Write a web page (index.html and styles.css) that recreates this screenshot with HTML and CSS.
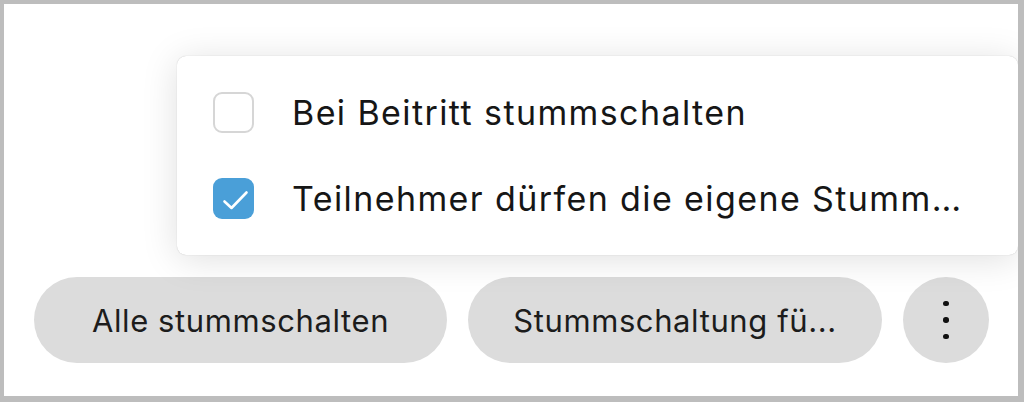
FILE: index.html
```html
<!DOCTYPE html>
<html lang="de">
<head>
<meta charset="utf-8">
<link rel="stylesheet" href="styles.css">
</head>
<body>
<div class="frame">
  <div class="actions">
    <button class="pill pill-all">Alle stummschalten</button>
    <button class="pill pill-unmute">Stummschaltung fü...</button>
    <button class="more" aria-label="Mehr">
      <span class="dot"></span><span class="dot"></span><span class="dot"></span>
    </button>
  </div>
  <div class="menu">
    <div class="option">
      <span class="box"></span>
      <span class="label">Bei Beitritt stummschalten</span>
    </div>
    <div class="option">
      <span class="box checked">
        <svg viewBox="0 0 41 41" width="41" height="41"><path d="M11.5 23.5 L18.5 30 L33.5 14.5" fill="none" stroke="#fff" stroke-width="2.6" stroke-linecap="round" stroke-linejoin="round"/></svg>
      </span>
      <span class="label">Teilnehmer dürfen die eigene Stumm…</span>
    </div>
  </div>
</div>
</body>
</html>
```

FILE: styles.css
```css
* { box-sizing: border-box; }
html, body { margin: 0; padding: 0; }
body {
  width: 1024px;
  height: 402px;
  background: #bdbdbd;
  font-family: Inter, "Noto Sans", sans-serif;
  color: #1a1a1a;
  overflow: hidden;
}
.frame {
  position: relative;
  width: 1024px;
  height: 402px;
  border-style: solid;
  border-color: #bdbdbd;
  border-width: 4px 6px 6px 4px;
  background: #ffffff;
  overflow: hidden;
}
.actions {
  display: flex;
  align-items: center;
  padding: 273px 0 0 30px;
}
.pill {
  height: 86px;
  border: none;
  border-radius: 43px;
  background: #dcdcdc;
  font-family: inherit;
  font-size: 31px;
  letter-spacing: 0.6px;
  color: #1c1c1c;
  padding: 0;
}
.pill-all { width: 413px; }
.pill-unmute { width: 414px; margin-left: 21px; }
.more {
  width: 86px;
  height: 86px;
  margin-left: 21px;
  border: none;
  border-radius: 50%;
  background: #dcdcdc;
  display: flex;
  flex-direction: column;
  align-items: center;
  justify-content: center;
  gap: 11px;
  padding: 0;
}
.dot {
  width: 5.5px;
  height: 5.5px;
  border-radius: 50%;
  background: #111;
}
.menu {
  position: absolute;
  left: 173px;
  top: 52px;
  width: 841px;
  height: 199px;
  background: #fff;
  border-radius: 9px;
  box-shadow: 0 0 1px rgba(0,0,0,0.25), 0 4px 36px rgba(0,0,0,0.13);
  padding: 36px 0 0 36px;
  display: flex;
  flex-direction: column;
  gap: 45px;
}
.option {
  display: flex;
  align-items: center;
  height: 41px;
}
.box {
  width: 41px;
  height: 41px;
  border: 2px solid #d6d6d6;
  border-radius: 9px;
  background: #fff;
  flex: none;
}
.box.checked {
  border: none;
  background: #4a9fd8;
}
.box svg { display: block; }
.label {
  margin-left: 38px;
  font-size: 34px;
  letter-spacing: 1.4px;
  color: #161616;
  white-space: nowrap;
}
```
